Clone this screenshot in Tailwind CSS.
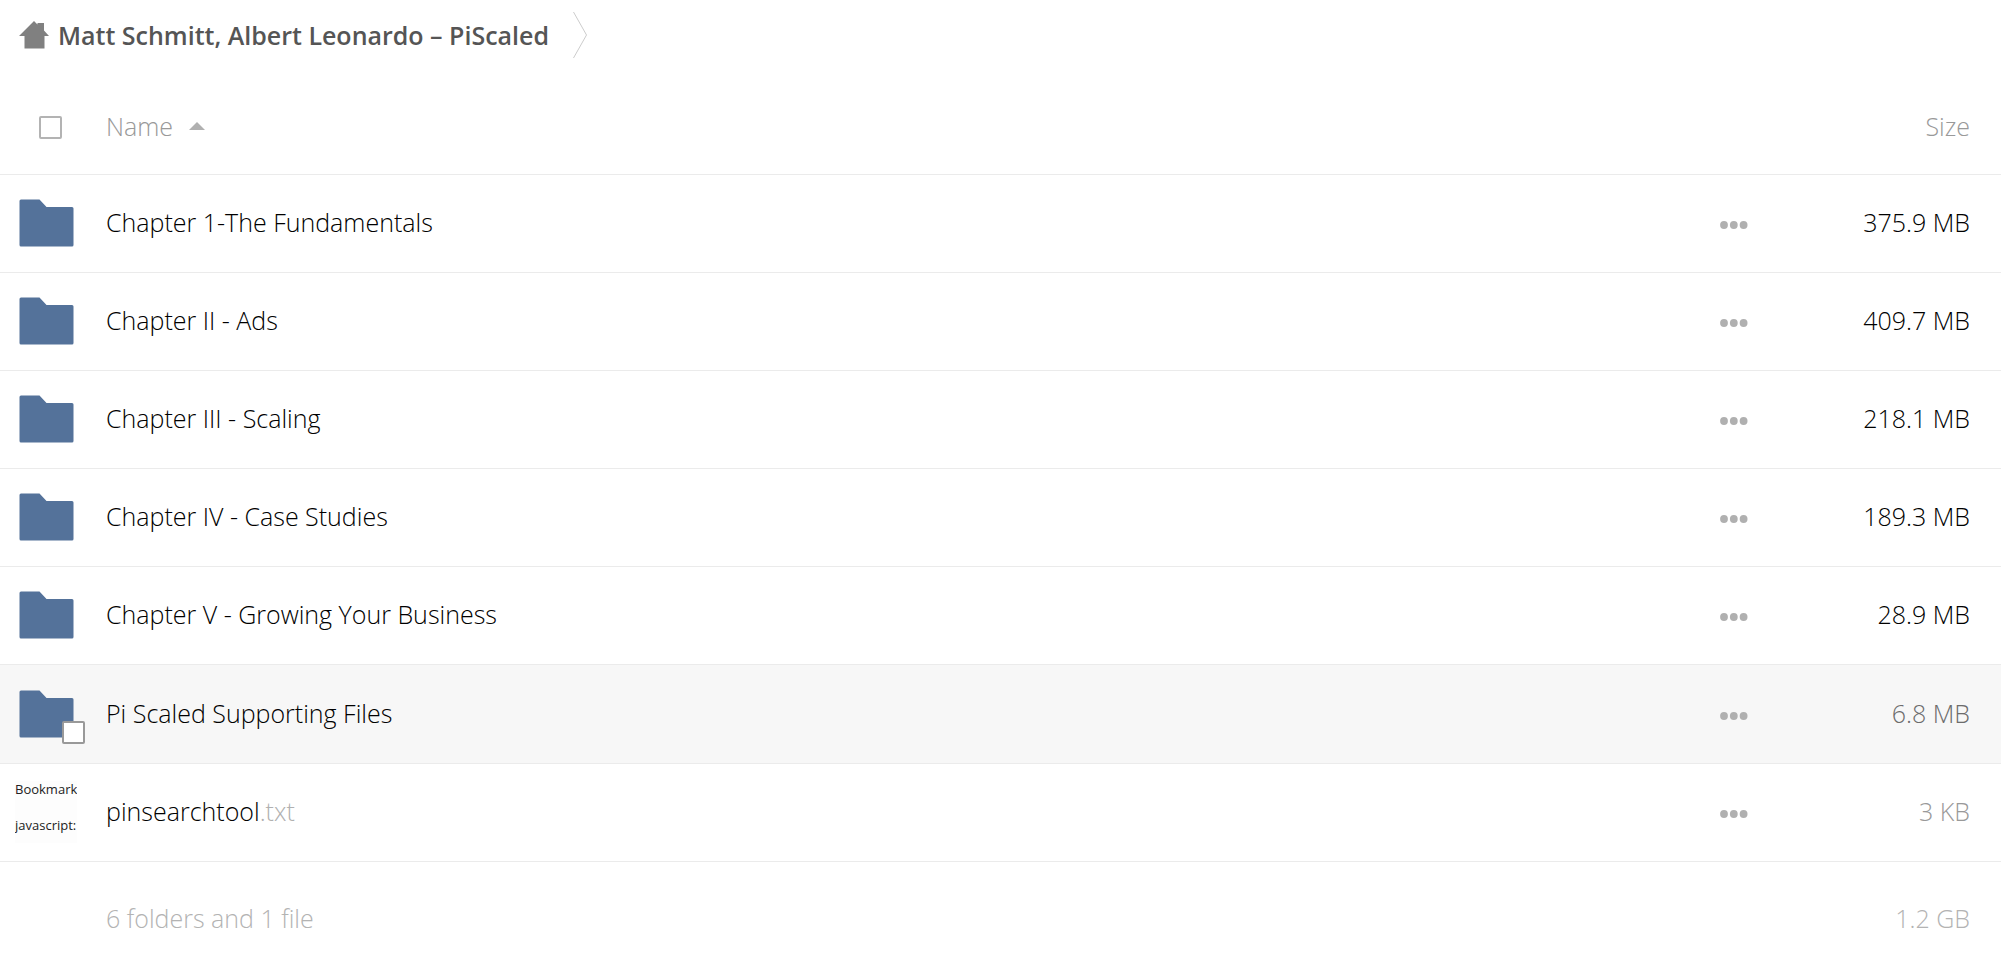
<!DOCTYPE html>
<html lang="en">
<head>
<meta charset="utf-8">
<title>Matt Schmitt, Albert Leonardo – PiScaled</title>
<script src="https://cdn.jsdelivr.net/npm/@tailwindcss/browser@4"></script>
</head>
<body class="bg-white font-['Open_Sans',sans-serif] text-[25px] leading-8 font-light text-black">
<svg class="hidden">
  <symbol id="folder" viewBox="0 0 55 48"><path fill="#54729a" d="M2 0.5H20.5L27.5 8H53Q54.5 8 54.5 9.500V46Q54.500 47.500 53 47.500H2Q0.500 47.500 0.500 46V2Q0.500 0.500 2 0.500Z"/></symbol>
  <symbol id="dots" viewBox="0 0 28 8"><g fill="#b0b0b0"><circle cx="4" cy="4" r="3.900"/><circle cx="13.800" cy="4" r="3.900"/><circle cx="23.600" cy="4" r="3.900"/></g></symbol>
</svg>
<nav aria-label="Breadcrumb" class="flex h-[70px] items-center pl-[19px]">
  <a href="#" class="flex items-center gap-[9px] font-semibold text-[#555]">
    <svg class="h-7 w-[30px]" viewBox="0 0 30 28"><path fill="#808080" d="M15 0L18.500 3.500V2H25V9.500L30 15H25.500V27.500H5.500V15H0Z"/></svg>
    <span>Matt Schmitt, Albert Leonardo – PiScaled</span>
  </a>
  <svg class="ml-6 h-[46px] w-[14px]" viewBox="0 0 14 46" fill="none" stroke="#cccccc"><path d="M0.500 0L13.500 23L0.500 46"/></svg>
</nav>
<table class="w-full table-fixed border-collapse">
  <colgroup><col class="w-[106px]"><col><col class="w-[120px]"><col class="w-[161px]"></colgroup>
  <thead>
    <tr class="h-[104px] border-b border-[#ebebeb] text-[#999]">
      <th class="pt-3 pl-[39px] text-left"><input type="checkbox" aria-label="Select all" class="block size-[23px] appearance-none rounded-xs border-2 border-[#b3b3b3] bg-white"></th>
      <th class="pt-2 text-left font-light" aria-sort="ascending"><button class="flex items-center gap-4">Name <svg class="h-2 w-4" viewBox="0 0 16 8"><path fill="#b0b0b0" d="M8 0L16 8H0Z"/></svg></button></th>
      <th></th>
      <th class="pt-2 pr-[31px] text-right font-light">Size</th>
    </tr>
  </thead>
  <tbody>
    <tr class="h-[98px] border-b border-[#ebebeb]">
      <td class="pl-[19px]"><svg class="h-12 w-[55px]"><use href="#folder"/></svg></td>
      <td class="pb-0.5"><a href="#">Chapter 1-The Fundamentals</a></td>
      <td><button aria-label="Actions" class="block pt-1"><svg class="h-2 w-7"><use href="#dots"/></svg></button></td>
      <td class="pb-0.5 pr-[31px] text-right whitespace-nowrap">375.9 MB</td>
    </tr>
    <tr class="h-[98px] border-b border-[#ebebeb]">
      <td class="pl-[19px]"><svg class="h-12 w-[55px]"><use href="#folder"/></svg></td>
      <td class="pb-0.5"><a href="#">Chapter II - Ads</a></td>
      <td><button aria-label="Actions" class="block pt-1"><svg class="h-2 w-7"><use href="#dots"/></svg></button></td>
      <td class="pb-0.5 pr-[31px] text-right whitespace-nowrap">409.7 MB</td>
    </tr>
    <tr class="h-[98px] border-b border-[#ebebeb]">
      <td class="pl-[19px]"><svg class="h-12 w-[55px]"><use href="#folder"/></svg></td>
      <td class="pb-0.5"><a href="#">Chapter III - Scaling</a></td>
      <td><button aria-label="Actions" class="block pt-1"><svg class="h-2 w-7"><use href="#dots"/></svg></button></td>
      <td class="pb-0.5 pr-[31px] text-right whitespace-nowrap">218.1 MB</td>
    </tr>
    <tr class="h-[98px] border-b border-[#ebebeb]">
      <td class="pl-[19px]"><svg class="h-12 w-[55px]"><use href="#folder"/></svg></td>
      <td class="pb-0.5"><a href="#">Chapter IV - Case Studies</a></td>
      <td><button aria-label="Actions" class="block pt-1"><svg class="h-2 w-7"><use href="#dots"/></svg></button></td>
      <td class="pb-0.5 pr-[31px] text-right whitespace-nowrap">189.3 MB</td>
    </tr>
    <tr class="h-[98px] border-b border-[#ebebeb]">
      <td class="pl-[19px]"><svg class="h-12 w-[55px]"><use href="#folder"/></svg></td>
      <td class="pb-0.5"><a href="#">Chapter V - Growing Your Business</a></td>
      <td><button aria-label="Actions" class="block pt-1"><svg class="h-2 w-7"><use href="#dots"/></svg></button></td>
      <td class="pb-0.5 pr-[31px] text-right whitespace-nowrap">28.9 MB</td>
    </tr>
    <tr class="h-[99px] border-b border-[#ebebeb] bg-[#f7f7f7]">
      <td class="pl-[19px]">
        <div class="relative w-[55px]">
          <svg class="h-12 w-[55px]"><use href="#folder"/></svg>
          <input type="checkbox" aria-label="Select Pi Scaled Supporting Files" class="absolute -right-[11px] -bottom-1.5 size-[23px] appearance-none rounded-xs border-2 border-[#999] bg-white">
        </div>
      </td>
      <td class="pb-0.5"><a href="#">Pi Scaled Supporting Files</a></td>
      <td><button aria-label="Actions" class="block pt-1"><svg class="h-2 w-7"><use href="#dots"/></svg></button></td>
      <td class="pb-0.5 pr-[31px] text-right whitespace-nowrap text-[#6c6c6c]">6.8 MB</td>
    </tr>
    <tr class="h-[98px] border-b border-[#ebebeb]">
      <td class="pl-[15px]">
        <div class="flex h-[62px] w-[62px] flex-col gap-5 overflow-hidden bg-[#fdfdfd] text-[13px] leading-4 font-normal whitespace-nowrap text-[#222]"><span>Bookmark</span><span>javascript:</span></div>
      </td>
      <td class="pb-0.5"><a href="#">pinsearchtool<span class="text-[#b0b0b0]">.txt</span></a></td>
      <td><button aria-label="Actions" class="block pt-1"><svg class="h-2 w-7"><use href="#dots"/></svg></button></td>
      <td class="pb-0.5 pr-[31px] text-right whitespace-nowrap text-[#999]">3 KB</td>
    </tr>
  </tbody>
  <tfoot>
    <tr class="h-[114px] text-[#b3b3b3]">
      <td></td><td>6 folders and 1 file</td><td></td><td class="pr-[31px] text-right whitespace-nowrap">1.2 GB</td>
    </tr>
  </tfoot>
</table>
</body>
</html>
